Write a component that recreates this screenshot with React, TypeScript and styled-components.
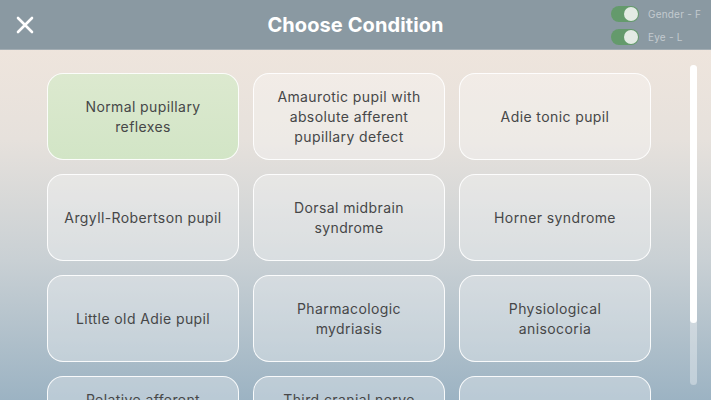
import styled, { createGlobalStyle } from "styled-components";

const GlobalStyle = createGlobalStyle`
  html, body {
    margin: 0;
    padding: 0;
    width: 711px;
    height: 400px;
    overflow: hidden;
    font-family: Inter, "Noto Sans", sans-serif;
  }
`;

const Page = styled.div`
  width: 711px;
  height: 400px;
  display: flex;
  flex-direction: column;
  overflow: hidden;
  background: linear-gradient(
    180deg,
    #f3e7dd 0%,
    #e6e1dc 35%,
    #c9d0d4 65%,
    #9cb3c3 100%
  );
`;

const Header = styled.header`
  height: 50px;
  flex-shrink: 0;
  background-color: #8a99a2;
  border-bottom: 1px solid #a3adb3;
  display: grid;
  grid-template-columns: 120px 1fr 120px;
  align-items: center;
  box-sizing: border-box;
`;

const CloseButton = styled.button`
  width: 50px;
  height: 50px;
  padding: 0 0 0 16px;
  border: none;
  background: none;
  display: flex;
  align-items: center;
  cursor: pointer;
`;

const Title = styled.h1`
  margin: 0;
  text-align: center;
  font-size: 20px;
  font-weight: 700;
  color: #ffffff;
  letter-spacing: 0.1px;
`;

const Toggles = styled.div`
  display: flex;
  flex-direction: column;
  gap: 7px;
  padding-left: 20px;
`;

const ToggleRow = styled.div`
  display: flex;
  align-items: center;
  gap: 9px;
`;

const Switch = styled.div<{ on: boolean }>`
  width: 28px;
  height: 16px;
  border-radius: 8px;
  background-color: ${(p) => (p.on ? "#649a6c" : "#9aa5ac")};
  display: flex;
  align-items: center;
  justify-content: ${(p) => (p.on ? "flex-end" : "flex-start")};
  padding: 0 1px;
  box-sizing: border-box;
`;

const Knob = styled.div`
  width: 14px;
  height: 14px;
  border-radius: 50%;
  background-color: #e3ebe4;
`;

const ToggleLabel = styled.span`
  font-size: 10px;
  color: #c3cacf;
  letter-spacing: 0.2px;
  white-space: nowrap;
`;

const Body = styled.main`
  flex: 1;
  display: flex;
  justify-content: space-between;
  padding: 0 14px 0 47px;
  overflow: hidden;
`;

const Grid = styled.div`
  display: grid;
  grid-template-columns: repeat(3, 192px);
  grid-auto-rows: 87px;
  gap: 14px;
  padding-top: 23px;
`;

const Card = styled.button<{ selected?: boolean }>`
  border-radius: 16px;
  border: 1.5px solid rgba(255, 255, 255, 0.9);
  background: ${(p) =>
    p.selected
      ? "linear-gradient(180deg, #dce9cf 0%, #d2e5c6 100%)"
      : "rgba(255, 255, 255, 0.3)"};
  display: flex;
  align-items: center;
  justify-content: center;
  padding: 0 14px;
  font-family: Inter, "Noto Sans", sans-serif;
  font-size: 14px;
  line-height: 20px;
  letter-spacing: 0.4px;
  color: #464748;
  text-align: center;
  cursor: pointer;
`;

const Scrollbar = styled.div`
  width: 7px;
  margin-top: 15px;
  height: 320px;
  border-radius: 4px;
  background-color: rgba(255, 255, 255, 0.35);
  display: flex;
  flex-direction: column;
`;

const Thumb = styled.div`
  height: 258px;
  border-radius: 4px;
  background-color: #ffffff;
`;

const conditions = [
  "Normal pupillary reflexes",
  "Amaurotic pupil with absolute afferent pupillary defect",
  "Adie tonic pupil",
  "Argyll-Robertson pupil",
  "Dorsal midbrain syndrome",
  "Horner syndrome",
  "Little old Adie pupil",
  "Pharmacologic mydriasis",
  "Physiological anisocoria",
  "Relative afferent pupillary defect (RAPD)",
  "Third cranial nerve palsy with pupil involvement",
  "Pupil-sparing palsy",
];

export default function App() {
  return (
    <Page>
      <GlobalStyle />
      <Header>
        <CloseButton aria-label="Close">
          <svg width="18" height="18" viewBox="0 0 18 18">
            <path
              d="M2 2 L16 16 M16 2 L2 16"
              stroke="#ffffff"
              strokeWidth="2.6"
              strokeLinecap="round"
            />
          </svg>
        </CloseButton>
        <Title>Choose Condition</Title>
        <Toggles>
          <ToggleRow>
            <Switch on>
              <Knob />
            </Switch>
            <ToggleLabel>Gender - F</ToggleLabel>
          </ToggleRow>
          <ToggleRow>
            <Switch on>
              <Knob />
            </Switch>
            <ToggleLabel>Eye - L</ToggleLabel>
          </ToggleRow>
        </Toggles>
      </Header>
      <Body>
        <Grid>
          {conditions.map((c, i) => (
            <Card key={c} selected={i === 0}>
              {c}
            </Card>
          ))}
        </Grid>
        <Scrollbar>
          <Thumb />
        </Scrollbar>
      </Body>
    </Page>
  );
}
